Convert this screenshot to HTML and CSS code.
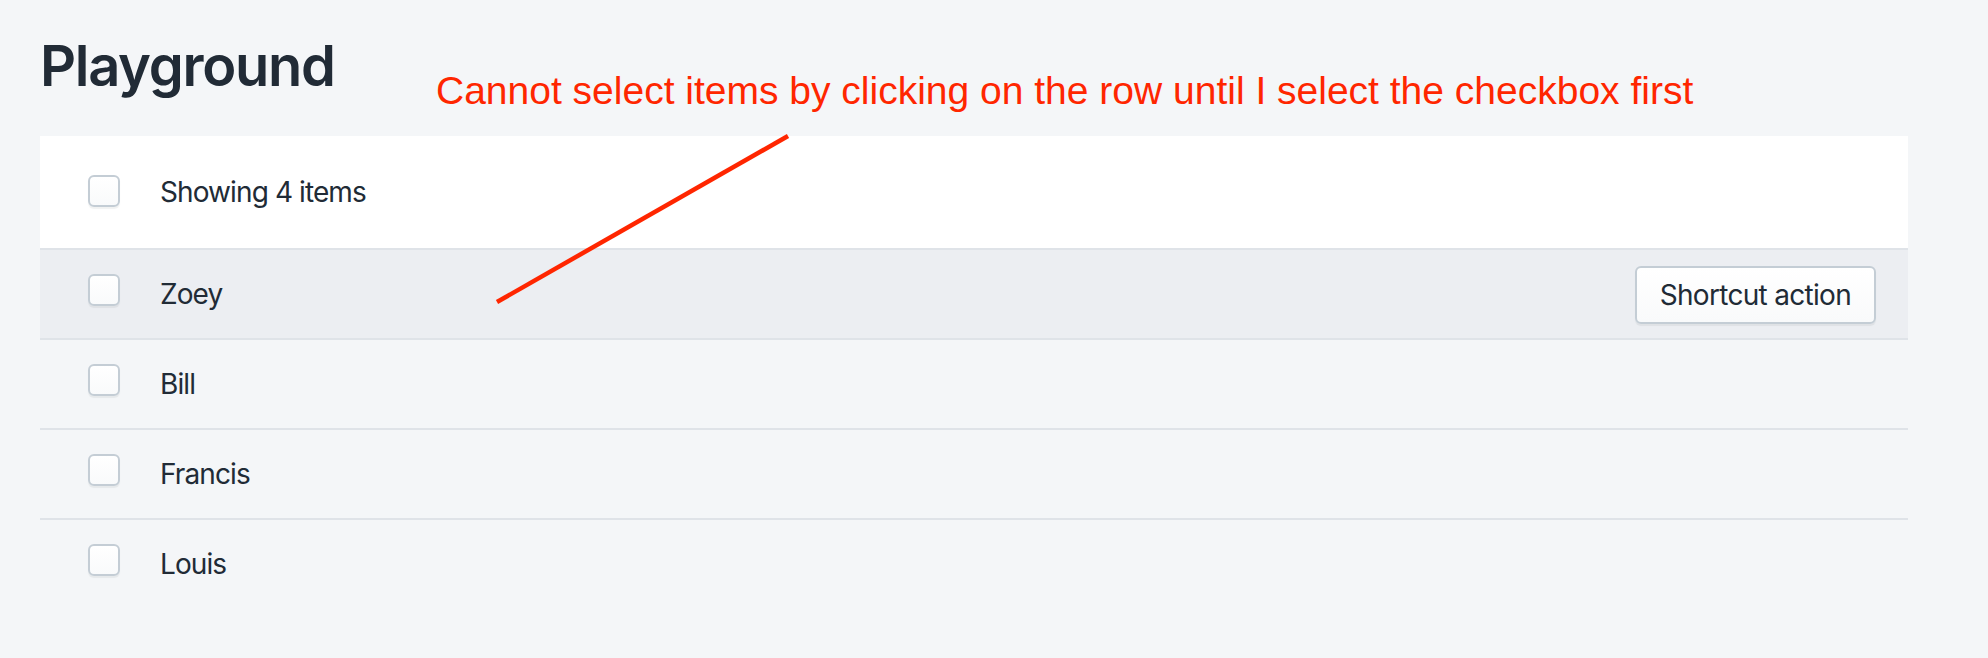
FILE: index.html
```html
<!DOCTYPE html>
<html lang="en">
<head>
<meta charset="utf-8">
<title>Playground</title>
<link rel="stylesheet" href="styles.css">
</head>
<body>
<div class="page">
  <h1 class="title">Playground</h1>
  <div class="list">
    <div class="list-header">
      <input type="checkbox" class="checkbox checkbox-header" aria-label="Select all">
      <span class="label">Showing 4 items</span>
    </div>
    <ul class="items">
      <li class="item item-hover">
        <input type="checkbox" class="checkbox" aria-label="Select Zoey">
        <span class="label">Zoey</span>
        <button class="button" type="button">Shortcut action</button>
      </li>
      <li class="item">
        <input type="checkbox" class="checkbox" aria-label="Select Bill">
        <span class="label">Bill</span>
      </li>
      <li class="item">
        <input type="checkbox" class="checkbox" aria-label="Select Francis">
        <span class="label">Francis</span>
      </li>
      <li class="item">
        <input type="checkbox" class="checkbox" aria-label="Select Louis">
        <span class="label">Louis</span>
      </li>
    </ul>
  </div>
</div>
<div class="annotation">
  <p class="annotation-text">Cannot select items by clicking on the row until I select the checkbox first</p>
  <svg class="annotation-line" width="1988" height="658" viewBox="0 0 1988 658" xmlns="http://www.w3.org/2000/svg">
    <line x1="788" y1="136" x2="497" y2="302" stroke="#ff2600" stroke-width="4.5"/>
  </svg>
</div>
</body>
</html>
```
FILE: styles.css
```css
* { box-sizing: border-box; }

html, body {
  margin: 0;
  padding: 0;
  background: #f4f6f8;
}

body {
  font-family: Inter, "Noto Sans", "Liberation Sans", sans-serif;
  color: #212b36;
  width: 1988px;
  height: 658px;
  overflow: hidden;
  position: relative;
}

.page {
  padding: 34px 80px 0 40px;
}

.title {
  margin: 0;
  font-size: 56px;
  line-height: 64px;
  font-weight: 600;
  letter-spacing: -1.3px;
  color: #212b36;
}

.list {
  margin-top: 38px;
}

.list-header {
  display: flex;
  align-items: flex-start;
  background: #ffffff;
  padding: 36px 32px 36px 48px;
  border-bottom: 2px solid #dfe3e8;
}

.items {
  list-style: none;
  margin: 0;
  padding: 0;
}

.item {
  display: flex;
  align-items: flex-start;
  padding: 24px 32px 24px 48px;
  border-bottom: 2px solid #dfe3e8;
}

.item:last-child {
  border-bottom: none;
}

.item-hover {
  background: #eceef2;
}

.label {
  font-size: 28px;
  line-height: 40px;
  letter-spacing: -0.9px;
  flex: 1;
}

.checkbox {
  appearance: none;
  -webkit-appearance: none;
  margin: 0 40px 0 0;
  width: 32px;
  height: 32px;
  flex: none;
  border: 2px solid #c4cdd5;
  border-radius: 6px;
  background: linear-gradient(180deg, #ffffff, #f9fafb);
  box-shadow: 0 2px 1px 0 rgba(22, 29, 37, 0.06);
}

.checkbox-header {
  margin-top: 3px;
}

.button {
  align-self: center;
  margin: -9px 0 -10px;
  height: 58px;
  padding: 0 23px;
  display: flex;
  align-items: center;
  font-family: inherit;
  font-size: 28px;
  line-height: 40px;
  letter-spacing: -0.7px;
  color: #212b36;
  border: 2px solid #c4cdd5;
  border-radius: 6px;
  background: linear-gradient(180deg, #ffffff, #f9fafb);
  box-shadow: 0 2px 1px 0 rgba(22, 29, 37, 0.06);
}

.annotation {
  position: absolute;
  inset: 0;
  pointer-events: none;
}

.annotation-text {
  position: absolute;
  left: 436px;
  top: 71px;
  margin: 0;
  font-family: "Liberation Sans", Arial, sans-serif;
  font-size: 39px;
  line-height: 39px;
  color: #ff2600;
  white-space: nowrap;
}

.annotation-line {
  position: absolute;
  left: 0;
  top: 0;
}
```
